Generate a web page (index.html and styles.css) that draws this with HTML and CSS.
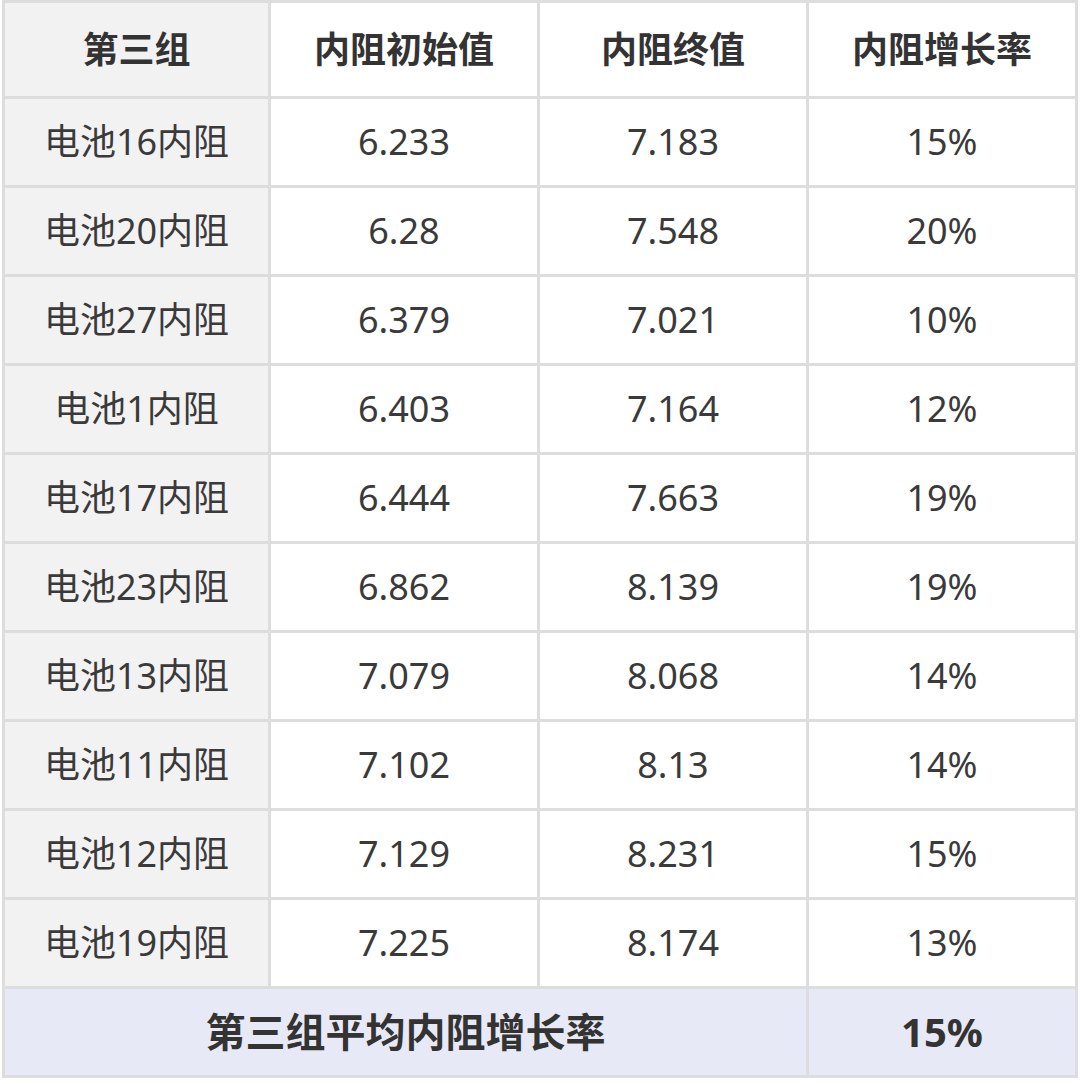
FILE: index.html
```html
<!DOCTYPE html>
<html lang="zh">
<head>
<meta charset="utf-8">
<link rel="stylesheet" href="styles.css">
</head>
<body>
<div class="table">
  <div class="cell head first">第三组</div>
  <div class="cell head">内阻初始值</div>
  <div class="cell head">内阻终值</div>
  <div class="cell head">内阻增长率</div>

  <div class="cell first">电池16内阻</div><div class="cell">6.233</div><div class="cell">7.183</div><div class="cell">15%</div>
  <div class="cell first">电池20内阻</div><div class="cell">6.28</div><div class="cell">7.548</div><div class="cell">20%</div>
  <div class="cell first">电池27内阻</div><div class="cell">6.379</div><div class="cell">7.021</div><div class="cell">10%</div>
  <div class="cell first">电池1内阻</div><div class="cell">6.403</div><div class="cell">7.164</div><div class="cell">12%</div>
  <div class="cell first">电池17内阻</div><div class="cell">6.444</div><div class="cell">7.663</div><div class="cell">19%</div>
  <div class="cell first">电池23内阻</div><div class="cell">6.862</div><div class="cell">8.139</div><div class="cell">19%</div>
  <div class="cell first">电池13内阻</div><div class="cell">7.079</div><div class="cell">8.068</div><div class="cell">14%</div>
  <div class="cell first">电池11内阻</div><div class="cell">7.102</div><div class="cell">8.13</div><div class="cell">14%</div>
  <div class="cell first">电池12内阻</div><div class="cell">7.129</div><div class="cell">8.231</div><div class="cell">15%</div>
  <div class="cell first">电池19内阻</div><div class="cell">7.225</div><div class="cell">8.174</div><div class="cell">13%</div>

  <div class="cell foot span3">第三组平均内阻增长率</div>
  <div class="cell foot">15%</div>
</div>
</body>
</html>
```
FILE: styles.css
```css
html, body {
  margin: 0;
  padding: 0;
  background: #ffffff;
}
body {
  padding-left: 2px;
  font-family: "Noto Sans", "Noto Sans CJK SC", sans-serif;
  color: #333333;
}
.table {
  width: 1076px;
  box-sizing: border-box;
  display: grid;
  grid-template-columns: 263px 266px 266px 266px;
  grid-template-rows: 93px repeat(11, 86px);
  gap: 3px;
  padding: 3px;
  background: #dddddd;
}
.cell {
  background: #ffffff;
  display: flex;
  align-items: center;
  justify-content: center;
  font-size: 36px;
  line-height: 1;
  color: #3a3a3a;
}
.first {
  background: #f2f2f2;
}
.head {
  font-weight: 700;
  color: #333333;
}
.foot {
  background: #e7eaf6;
  font-weight: 700;
  font-size: 40px;
  color: #333333;
}
.span3 {
  grid-column: 1 / 4;
}
```
